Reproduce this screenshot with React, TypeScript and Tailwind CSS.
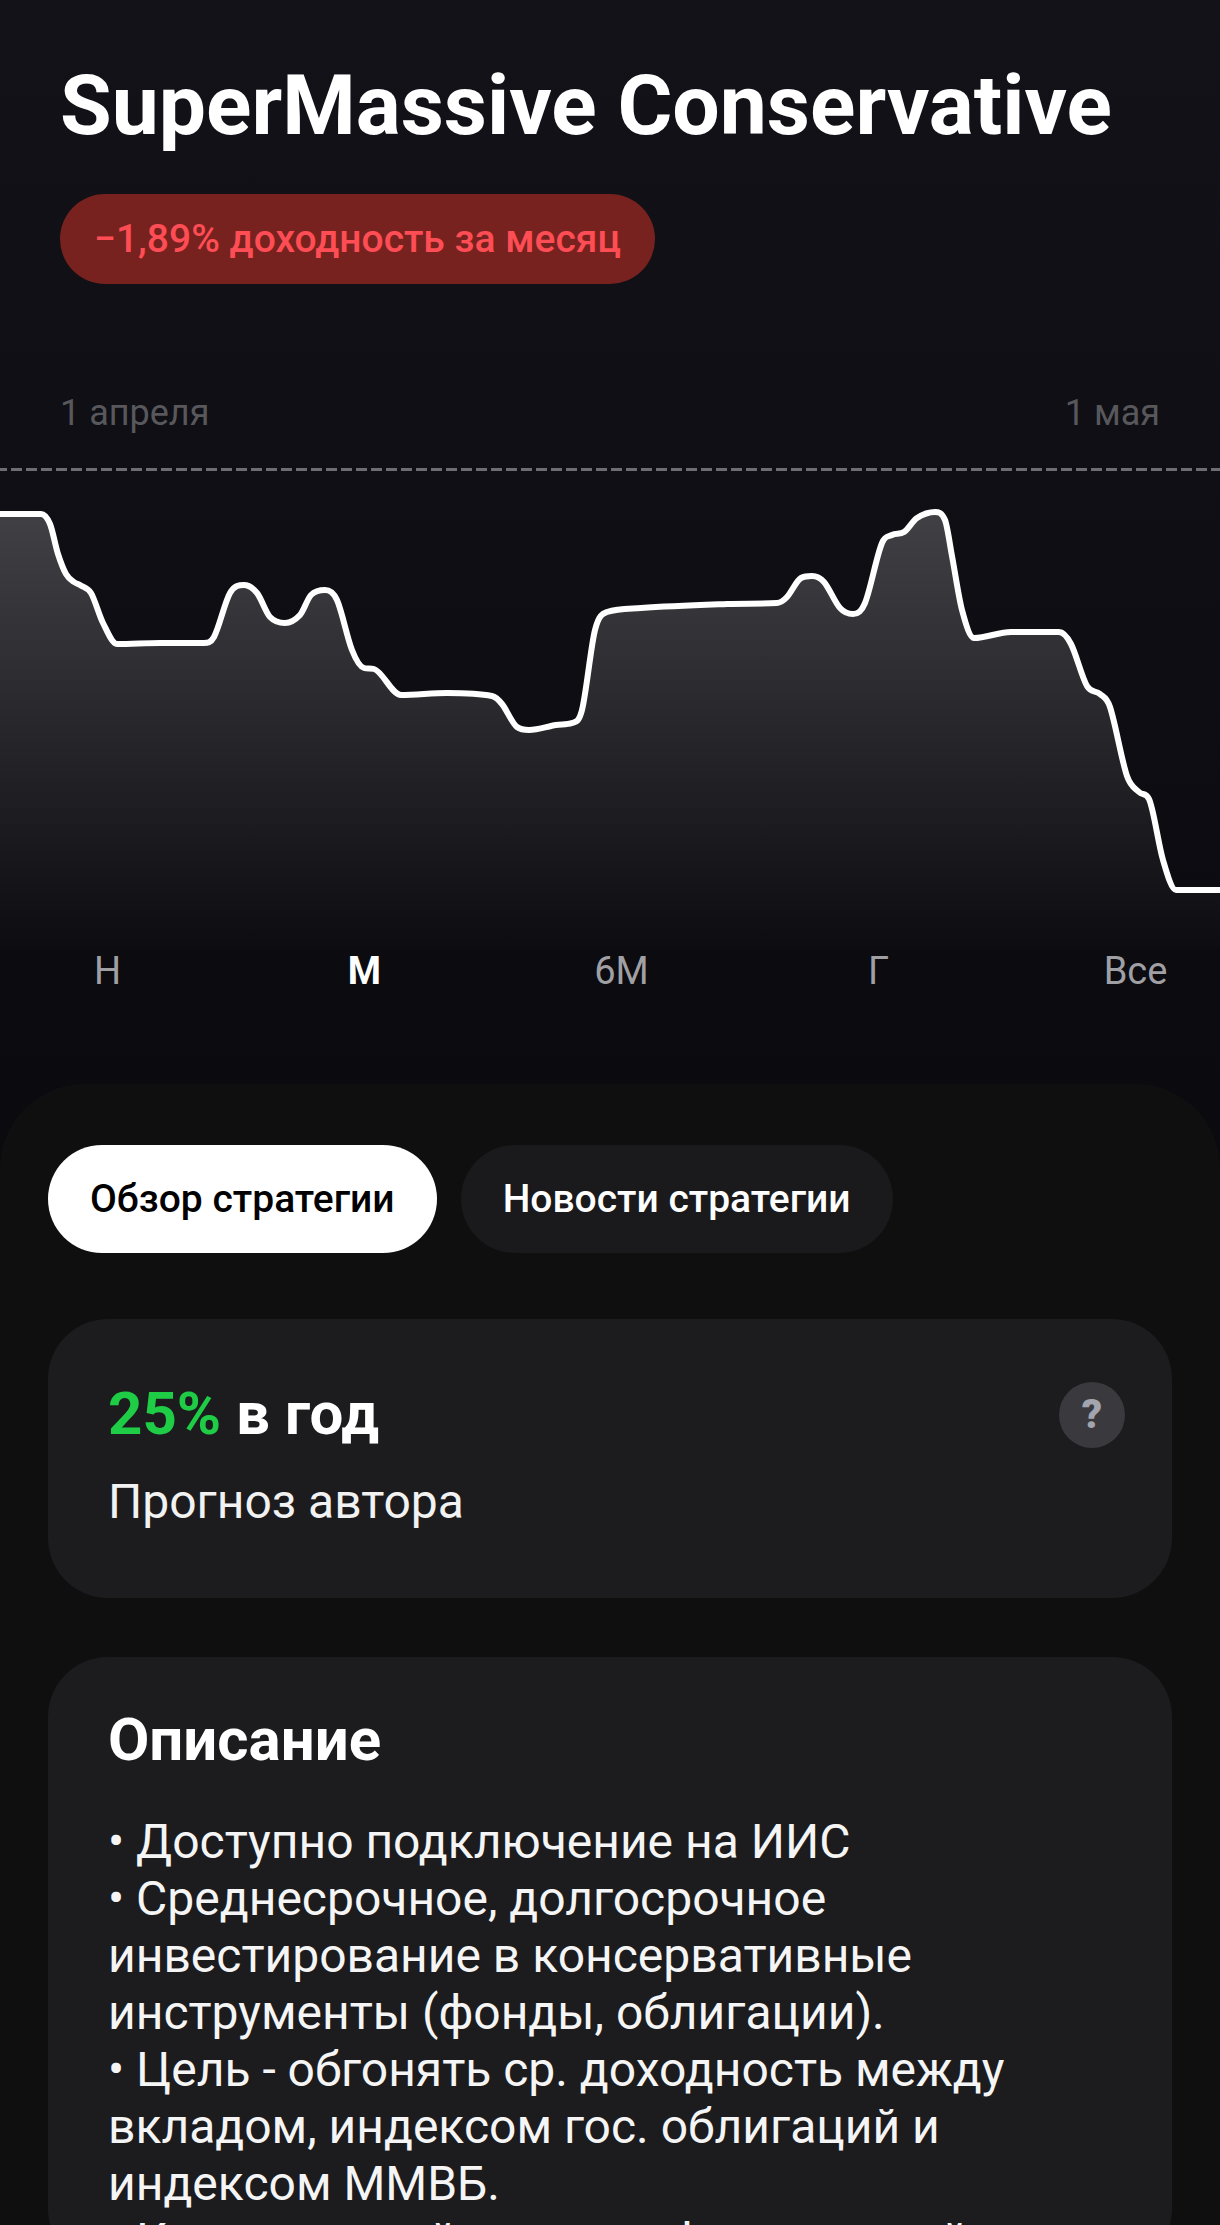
const FONT = "font-['Roboto',sans-serif]";

const points: [number, number][] = [
  [-10, 514], [41, 514], [50, 524], [58, 554], [66, 574], [74, 582], [80, 585], [91, 593], [103, 623], [117, 644],
  [160, 643], [204, 643], [214, 637], [230, 593], [244, 585], [257, 593], [270, 617], [285, 623],
  [300, 615], [311, 595], [325, 590], [337, 600], [352, 650], [364, 668], [374, 669], [401, 695],
  [447, 693], [492, 696], [502, 704], [517, 727], [529, 730], [556, 725], [572, 723], [582, 710],
  [595, 630], [607, 612], [641, 608], [727, 604], [777, 603], [787, 597], [801, 578], [812, 576],
  [824, 582], [840, 608], [853, 614], [865, 603], [882, 543], [892, 535], [904, 532], [917, 518],
  [935, 512], [945, 520], [952, 556], [962, 610], [974, 638], [1011, 632], [1059, 632], [1071, 644],
  [1087, 686], [1100, 694], [1110, 707], [1127, 776], [1139, 792], [1149, 799], [1163, 860],
  [1176, 890], [1230, 890],
];

const TOP = 471;

// centred slopes, zeroed at turning points and clamped so flats stay flat
function linePath(): string {
  const p = points.map(([x, y]) => [x, y - TOP]);
  const s = p.slice(1).map((c, i) => (c[1] - p[i][1]) / (c[0] - p[i][0]));
  const m = p.map((_, i) => {
    if (i === 0 || i === p.length - 1) return 0;
    const a = s[i - 1];
    const b = s[i];
    if (a * b <= 0) return 0;
    const centred = (p[i + 1][1] - p[i - 1][1]) / (p[i + 1][0] - p[i - 1][0]);
    return Math.sign(centred) * Math.min(Math.abs(centred), 3 * Math.abs(a), 3 * Math.abs(b));
  });
  let d = `M${p[0][0]} ${p[0][1]}`;
  for (let i = 0; i < p.length - 1; i++) {
    const dx = (p[i + 1][0] - p[i][0]) / 3;
    const c1y = p[i][1] + m[i] * dx;
    const c2y = p[i + 1][1] - m[i + 1] * dx;
    d += ` C${(p[i][0] + dx).toFixed(1)} ${c1y.toFixed(1)} ${(p[i + 1][0] - dx).toFixed(1)} ${c2y.toFixed(1)} ${p[i + 1][0]} ${p[i + 1][1]}`;
  }
  return d;
}

function Chart() {
  const line = linePath();
  return (
    <svg width="1220" height="478" viewBox="0 0 1220 478" className="block">
      <defs>
        <linearGradient id="area" x1="0" y1="41" x2="0" y2="478" gradientUnits="userSpaceOnUse">
          <stop offset="0" stopColor="#414145" />
          <stop offset="1" stopColor="#0d0d11" />
        </linearGradient>
      </defs>
      <path d={`${line} L1230 478 L-10 478 Z`} fill="url(#area)" />
      <path d={line} fill="none" stroke="#ffffff" strokeWidth="6" />
    </svg>
  );
}

const periods = ['Н', 'М', '6М', 'Г', 'Все'];

export default function App() {
  return (
    <div className={`${FONT} h-[2225px] overflow-hidden bg-gradient-to-b from-[#121218] to-[#0a0a0f] to-50% text-white`}>
      <div className="px-[60px] pt-[57px]">
        <h1 className="text-[84px] leading-[98px] font-bold">SuperMassive Conservative</h1>
        <div className="mt-[39px] inline-flex h-[90px] items-center rounded-full bg-[#78221f] px-[34px] text-[39px] font-medium text-[#ff4d55]">
          −1,89% доходность за месяц
        </div>
        <div className="mt-[109px] flex justify-between text-[36px] leading-[40px] text-[#58585c]">
          <span>1 апреля</span>
          <span>1 мая</span>
        </div>
      </div>

      <svg width="1220" height="3" className="mt-[35px] block">
        <line x1="-4" y1="1.5" x2="1220" y2="1.5" stroke="#6e6e72" strokeWidth="3" strokeDasharray="11 4" />
      </svg>
      <div className="h-[478px]">
        <Chart />
      </div>

      <div className="ml-[-21px] grid w-[1285px] grid-cols-5 text-center text-[38px] leading-[44px] text-[#a0a0a4]">
        {periods.map((p) => (
          <span key={p} className={p === 'М' ? 'font-bold text-white' : ''}>
            {p}
          </span>
        ))}
      </div>

      <div className="mt-[91px] h-[1200px] rounded-t-[84px] bg-[#0f0f10] px-[48px] pt-[61px]">
        <div className="flex gap-[24px]">
          <button className="h-[108px] rounded-full bg-white px-[42px] text-[39px] font-medium text-black">
            Обзор стратегии
          </button>
          <button className="h-[108px] rounded-full bg-[#1a1a1c] px-[42px] text-[39px] font-medium text-white">
            Новости стратегии
          </button>
        </div>

        <div className="mt-[66px] flex h-[279px] items-start justify-between rounded-[60px] bg-[#1c1c1f] px-[60px] pt-[60px]">
          <div>
            <div className="text-[60px] leading-[70px] font-bold">
              <span className="text-[#1fcc46]">25%</span> в год
            </div>
            <div className="mt-[25px] text-[48px] leading-[56px] text-[#f2f2f2]">Прогноз автора</div>
          </div>
          <div className="mt-[3px] mr-[-13px] flex h-[66px] w-[66px] items-center justify-center rounded-full bg-[#3a3a3e] text-[40px] font-black text-[#a2a4ae]">
            ?
          </div>
        </div>

        <div className="mt-[59px] rounded-[60px] bg-[#1c1c1f] px-[60px] pt-[48px]">
          <h2 className="text-[60px] leading-[70px] font-bold">Описание</h2>
          <p className="mt-[38px] text-[48px] leading-[57px] text-[#f5f5f5]">
            • Доступно подключение на ИИС
            <br />
            • Среднесрочное, долгосрочное инвестирование в консервативные инструменты (фонды, облигации).
            <br />
            • Цель - обгонять ср. доходность между вкладом, индексом гос. облигаций и индексом ММВБ.
            <br />
            • Классический риск-профиль, низкий
          </p>
        </div>
      </div>
    </div>
  );
}
